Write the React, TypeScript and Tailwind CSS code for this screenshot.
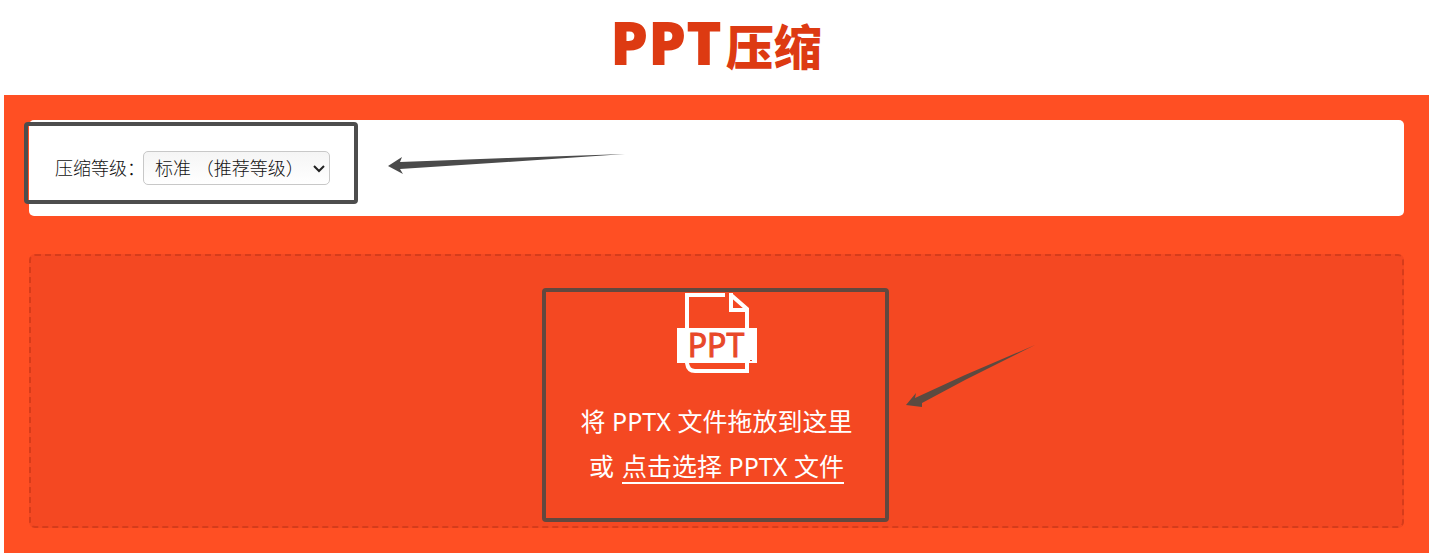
import { useRef, useState } from "react";

const LEVELS = [
  { value: "standard", label: "标准 （推荐等级）" },
  { value: "high", label: "高压缩" },
  { value: "low", label: "低压缩" },
];

function PptFileIcon() {
  return (
    <svg width="80" height="81" viewBox="0 0 80 81" aria-hidden="true">
      <g fill="none" stroke="#fff" strokeWidth="4">
        <path d="M10 37V3H48" />
        <path d="M54 1V18H70" />
        <path d="M54 3L70 17V37" />
        <path d="M10 69V71Q11 79 18 79H70V69" />
      </g>
      <rect y="36" width="80" height="35" fill="#fff" />
      <text
        x="39"
        y="65"
        textAnchor="middle"
        fill="#e8482a"
        stroke="#e8482a"
        strokeWidth="1"
        className="font-['Noto_Sans',sans-serif] text-[32px]"
      >
        PPT
      </text>
      <rect x="73" y="68" width="2" height="1" fill="#e8482a" />
    </svg>
  );
}

function LevelPanel() {
  const [level, setLevel] = useState("standard");

  return (
    <section className="relative rounded-[5px] bg-white px-[26px] py-[31px]">
      <div className="flex items-center text-lg font-light text-[#111]">
        <label htmlFor="level" className="w-[88px] whitespace-nowrap">
          压缩等级：
        </label>
        <div className="relative">
          <select
            id="level"
            value={level}
            onChange={(e) => setLevel(e.target.value)}
            className="block h-[34px] w-[187px] appearance-none rounded-[5px] border border-[#c8c8c8] bg-linear-to-b from-[#f5f5f5] to-white pl-[11px] text-lg leading-8"
          >
            {LEVELS.map((item) => (
              <option key={item.value} value={item.value}>
                {item.label}
              </option>
            ))}
          </select>
          <svg
            width="12"
            height="8"
            viewBox="0 0 12 8"
            className="pointer-events-none absolute top-[14px] right-[5px]"
            aria-hidden="true"
          >
            <path d="M1 1L6 6L11 1" fill="none" stroke="#222" strokeWidth="2" />
          </svg>
        </div>
      </div>

      {/* Step highlight */}
      <div className="pointer-events-none absolute top-[2px] -left-[5px] h-[82px] w-[334px] rounded-[4px] border-4 border-[#4d4d4d]" />
      <svg
        width="240"
        height="24"
        viewBox="0 0 240 24"
        className="pointer-events-none absolute top-8 left-[358px]"
        aria-hidden="true"
      >
        <path
          d="M1 14L15 5L13 10L120 6L238 2L120 10L13 17L16 22Z"
          fill="#4a4a4a"
        />
      </svg>
    </section>
  );
}

function DropZone() {
  const inputRef = useRef<HTMLInputElement>(null);

  return (
    <section className="flex justify-center rounded-[6px] border-2 border-dashed border-[#d63c1b] bg-[#f44822] pt-9 pb-[37px]">
      <div className="relative flex flex-col items-center text-center text-[25px] leading-[45px] text-white">
        <PptFileIcon />
        <p className="mt-[26px]">将 PPTX 文件拖放到这里</p>
        <p className="flex gap-2">
          <span>或</span>
          <button
            type="button"
            onClick={() => inputRef.current?.click()}
            className="h-10 cursor-pointer border-b-2 border-white"
          >
            点击选择 PPTX 文件
          </button>
        </p>
        <input
          ref={inputRef}
          type="file"
          accept=".pptx"
          aria-label="选择 PPTX 文件"
          className="hidden"
        />

        {/* Step highlight */}
        <div className="pointer-events-none absolute -top-1 left-1/2 -ml-[175px] h-[234px] w-[347px] rounded-[4px] border-4 border-[#62483f]" />
        <svg
          width="132"
          height="66"
          viewBox="0 0 132 66"
          className="pointer-events-none absolute top-[52px] left-1/2 ml-[188px]"
          aria-hidden="true"
        >
          <path
            d="M1 61L11 49L10 54L60 31L130 1L60 36L17 59L17 63Z"
            fill="#5c4a40"
          />
        </svg>
      </div>
    </section>
  );
}

export default function App() {
  return (
    <div className="bg-white pb-[6px] font-['Noto_Sans','Noto_Sans_CJK_SC',sans-serif]">
      <header className="flex h-[95px] items-center justify-center pr-1 pb-3">
        <h1 className="flex items-baseline gap-1 font-['Noto_Sans','Noto_Sans_CJK_SC',sans-serif] leading-none font-black text-[#dd3a12]">
          <span className="text-[60px] leading-none">PPT</span>
          <span className="text-5xl leading-none">压缩</span>
        </h1>
      </header>
      <main className="mr-[7px] ml-1 flex flex-col gap-[38px] bg-[#ff4f23] p-[25px]">
        <LevelPanel />
        <DropZone />
      </main>
    </div>
  );
}
